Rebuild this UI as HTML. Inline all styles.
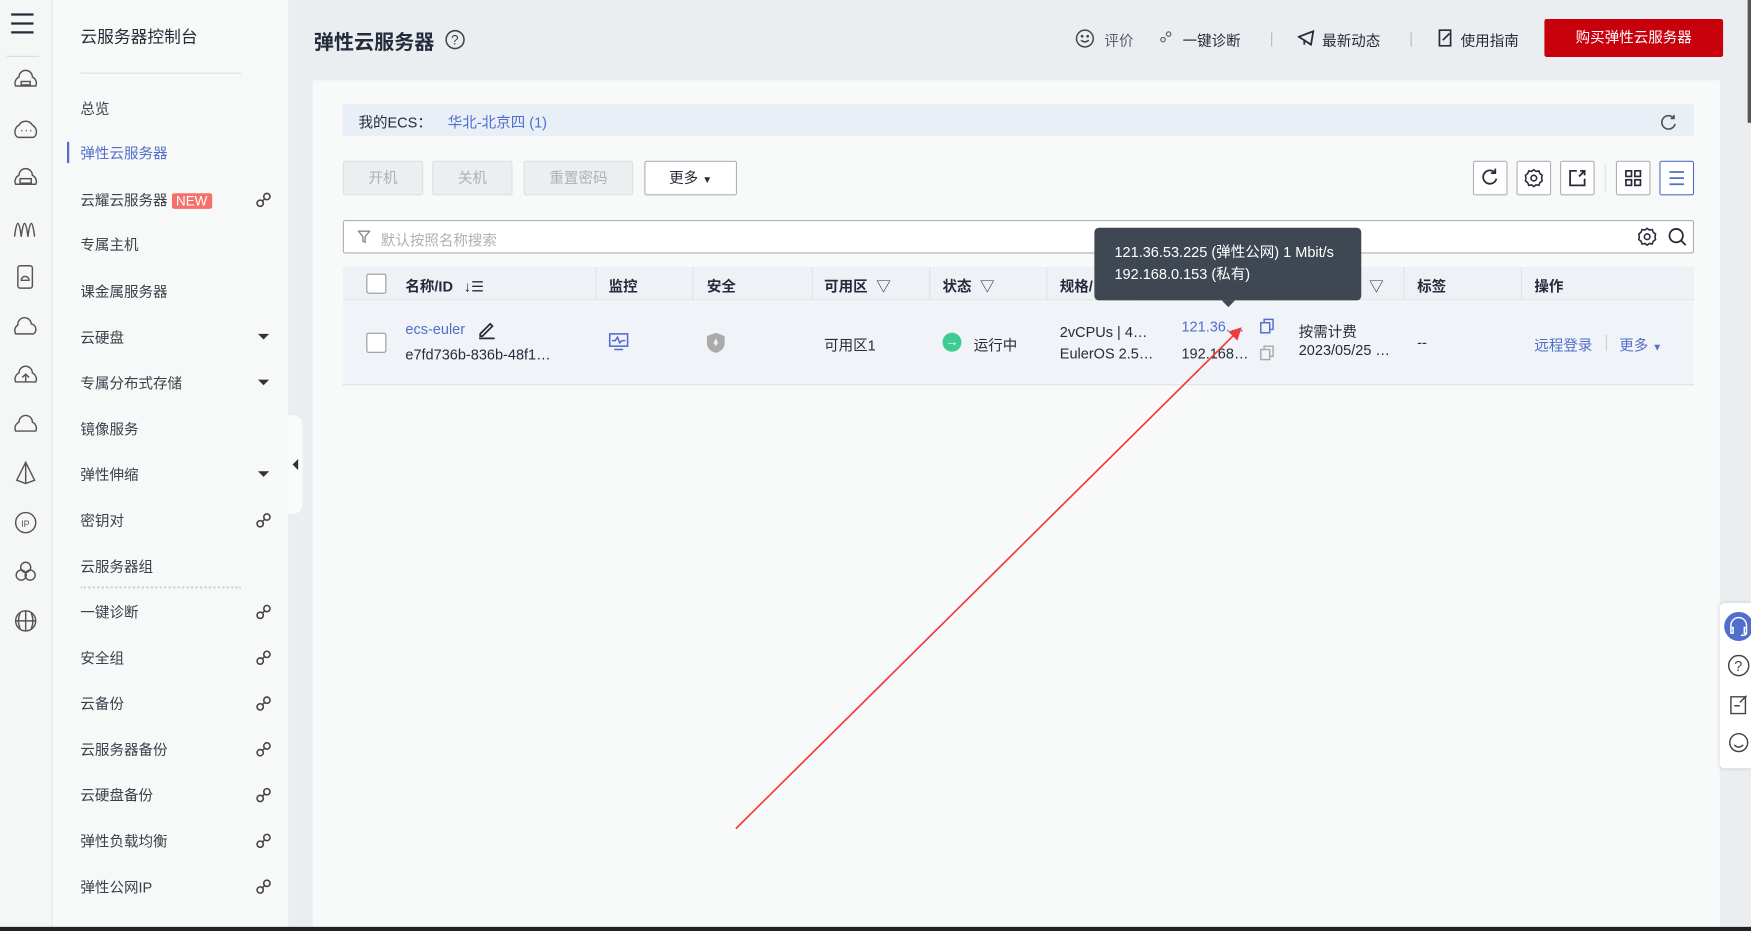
<!DOCTYPE html>
<html><head><meta charset="utf-8"><style>
*{box-sizing:border-box;margin:0;padding:0}
html,body{width:1751px;height:931px;overflow:hidden;background:#ebeff1}
#w{position:absolute;left:0;top:0;width:1568px;height:834px;transform:scale(1.11671);transform-origin:0 0;font-family:"Liberation Sans","Noto Sans CJK SC",sans-serif;color:#252b3a;font-size:13px;background:#eaeef0}
.a{position:absolute}
.ib{left:0;top:0;width:47px;height:834px;background:#f5f7f6;border-right:1px solid #e3e6e8}
.sb{left:47px;top:0;width:211px;height:834px;background:#f7f9f8}
.mi{position:absolute;left:25px;font-size:13px;color:#3a3f4a}
.car{position:absolute;left:184px;width:0;height:0;border-left:5px solid transparent;border-right:5px solid transparent;border-top:5px solid #333}
.card{left:280px;top:72px;width:1260px;height:762px;background:#f7faf8}
.btn{position:absolute;top:144px;height:31px;border:1px solid #dfe1e6;background:#eceeef;color:#adb0b8;font-size:13px;text-align:center;line-height:29px;border-radius:2px}
.ibtn{position:absolute;top:144px;width:31px;height:31px;border:1px solid #adb0b8;background:#fff;border-radius:2px}
.th{position:absolute;top:246px;font-size:13px;font-weight:bold;color:#252b3a}
.cd{position:absolute;top:239px;width:1px;height:30px;background:#e0e3e8}
</style></head><body><div id="w">
<div class="a ib">
 <svg class="a" style="left:9px;top:11px" width="22" height="20"><path d="M1 2H21M1 10H21M1 18H21" stroke="#252b3a" stroke-width="2"/></svg>
 <div class="a" style="left:6px;top:50px;width:29px;height:1px;background:#d9dcdf"></div>
 <svg class="a" style="left:11px;top:60px" width="24" height="520" fill="none" stroke="#555" stroke-width="1.3">
  <path d="M3 17a6 6 0 0 1 3-8a6 6 0 0 1 12 0a6 6 0 0 1 3 8z"/><rect x="8" y="13" width="8" height="3"/>
  <g transform="translate(0,44)"><path d="M3 17a7 7 0 0 1 3-9a7 7 0 0 1 12 0a7 7 0 0 1 3 9a4 4 0 0 1-2 2H5a4 4 0 0 1-2-2z"/><path d="M8 13h1M12 13h1M16 13h1"/></g>
  <g transform="translate(0,88)"><path d="M3 17a6 6 0 0 1 3-8a6 6 0 0 1 12 0a6 6 0 0 1 3 8z"/><rect x="7" y="12" width="10" height="4"/></g>
  <g transform="translate(0,132)"><path d="M2 20C4 4 6 4 8 20C10 4 12 4 14 20C16 4 18 4 20 20"/></g>
  <g transform="translate(0,176)"><rect x="5" y="2" width="13" height="20" rx="2"/><path d="M8 15a3 3 0 0 1 7 0z"/></g>
  <g transform="translate(0,220)"><path d="M3 19a6 6 0 0 1 2-8a6 6 0 0 1 12-1a5 5 0 0 1 2 9z"/></g>
  <g transform="translate(0,264)"><path d="M3 18a6 6 0 0 1 3-8a6 6 0 0 1 12 0a6 6 0 0 1 3 8z"/><path d="M12 18v-7M9 14l3-3 3 3"/></g>
  <g transform="translate(0,308)"><path d="M3 18a6 6 0 0 1 3-8a6 6 0 0 1 12 0a6 6 0 0 1 3 8z"/></g>
  <g transform="translate(0,352)"><path d="M12 2L4 18l8 3 8-3zM12 2v19"/></g>
  <g transform="translate(0,396)"><circle cx="12" cy="12" r="9"/><text x="8" y="16" font-size="8" stroke="none" fill="#555">IP</text></g>
  <g transform="translate(0,440)"><circle cx="12" cy="8" r="4.5"/><circle cx="8" cy="15" r="4.5"/><circle cx="16" cy="15" r="4.5"/></g>
  <g transform="translate(0,484)"><circle cx="12" cy="12" r="9"/><path d="M3 12h18M12 3v18M7 5q-3 7 0 14M17 5q3 7 0 14"/></g>
 </svg>
</div>
<div class="a sb">
 <div class="a" style="left:25px;top:22px;font-size:15px">云服务器控制台</div>
 <div class="a" style="left:25px;top:65px;width:144px;height:1px;background:#dcdfe3"></div>
 <div class="mi" style="top:87px">总览</div>
 <div class="a" style="left:13px;top:127px;width:2px;height:19px;background:#526ecc"></div>
 <div class="mi" style="top:127px;color:#526ecc">弹性云服务器</div>
 <div class="mi" style="top:169px">云耀云服务器 <span style="background:#f66f6a;color:#fff;padding:0 4px;font-size:12px;border-radius:2px">NEW</span></div>
 <div class="mi" style="top:209px">专属主机</div>
 <div class="mi" style="top:251px">课金属服务器</div>
 <div class="mi" style="top:292px">云硬盘</div><div class="car" style="top:299px"></div>
 <div class="mi" style="top:333px">专属分布式存储</div><div class="car" style="top:340px"></div>
 <div class="mi" style="top:374px">镜像服务</div>
 <div class="mi" style="top:415px">弹性伸缩</div><div class="car" style="top:422px"></div>
 <div class="mi" style="top:456px">密钥对</div>
 <div class="mi" style="top:497px">云服务器组</div>
 <div class="a" style="left:25px;top:525px;width:144px;border-top:2px dotted #d0d4d8"></div>
 <div class="mi" style="top:538px">一键诊断</div>
 <div class="mi" style="top:579px">安全组</div>
 <div class="mi" style="top:620px">云备份</div>
 <div class="mi" style="top:661px">云服务器备份</div>
 <div class="mi" style="top:702px">云硬盘备份</div>
 <div class="mi" style="top:743px">弹性负载均衡</div>
 <div class="mi" style="top:784px">弹性公网IP</div>
 <svg class="a" style="left:182px;top:0" width="14" height="834" fill="none" stroke="#444" stroke-width="1.4">
  <defs><g id="l"><circle cx="4" cy="10" r="2.8"/><circle cx="10" cy="4" r="2.8"/><path d="M6 8l2-2"/></g></defs>
  <use href="#l" y="172"/><use href="#l" y="459"/><use href="#l" y="541"/><use href="#l" y="582"/><use href="#l" y="623"/><use href="#l" y="664"/><use href="#l" y="705"/><use href="#l" y="746"/><use href="#l" y="787"/>
 </svg>
</div>
<div class="a" style="left:258px;top:372px;width:13px;height:88px;background:#fafbfb;border-radius:0 8px 8px 0"></div>
<div class="a" style="left:262px;top:411px;width:0;height:0;border-top:5px solid transparent;border-bottom:5px solid transparent;border-right:5px solid #333"></div>

<div class="a" style="left:281px;top:24px;font-size:18px;font-weight:bold">弹性云服务器</div>
<svg class="a" style="left:398px;top:26px" width="19" height="19" fill="none" stroke="#444" stroke-width="1.4"><circle cx="9.5" cy="9.5" r="8"/><text x="6" y="14" font-size="12" stroke="none" fill="#444">?</text></svg>
<svg class="a" style="left:963px;top:26px" width="17" height="17" fill="none" stroke="#444" stroke-width="1.3"><circle cx="8.5" cy="8.5" r="7.5"/><path d="M5 10q3.5 3 7 0"/><circle cx="6" cy="6.5" r=".6"/><circle cx="11" cy="6.5" r=".6"/></svg>
<div class="a" style="left:989px;top:26px;color:#575d6c">评价</div>
<svg class="a" style="left:1038px;top:27px" width="12" height="12" fill="none" stroke="#555"><circle cx="3.5" cy="8.5" r="2"/><circle cx="8.5" cy="3.5" r="2"/></svg>
<div class="a" style="left:1059px;top:26px">一键诊断</div>
<div class="a" style="left:1137px;top:27px;color:#bbb">|</div>
<svg class="a" style="left:1162px;top:27px" width="16" height="14" fill="none" stroke="#252b3a" stroke-width="1.6"><path d="M1 6L14 1L12 13L6 9z M6 9v4"/></svg>
<div class="a" style="left:1184px;top:26px">最新动态</div>
<div class="a" style="left:1262px;top:27px;color:#bbb">|</div>
<svg class="a" style="left:1287px;top:26px" width="14" height="16" fill="none" stroke="#252b3a" stroke-width="1.5"><path d="M2 1h10v14H2zM5 10l6-6"/></svg>
<div class="a" style="left:1308px;top:26px">使用指南</div>
<div class="a" style="left:1383px;top:17px;width:160px;height:34px;background:#c7000b;color:#fff;text-align:center;line-height:34px;font-size:13px;border-radius:2px">购买弹性云服务器</div>

<div class="a card"></div>
<div class="a" style="left:307px;top:93px;width:1210px;height:29px;background:#e8eff6"></div>
<div class="a" style="left:321px;top:99px">我的ECS：</div>
<div class="a" style="left:401px;top:99px;color:#526ecc">华北-北京四 (1)</div>
<svg class="a" style="left:1486px;top:102px" width="16" height="16" fill="none" stroke="#555" stroke-width="1.5"><path d="M13 4A6 6 0 1 0 14 9M13 1v3h-3"/></svg>

<div class="btn" style="left:307px;width:72px">开机</div>
<div class="btn" style="left:387px;width:72px">关机</div>
<div class="btn" style="left:469px;width:98px">重置密码</div>
<div class="btn" style="left:577px;width:83px;background:#fff;border-color:#adb0b8;color:#252b3a">更多 <span style="font-size:9px">▼</span></div>
<div class="ibtn" style="left:1319px"><svg width="29" height="29" fill="none" stroke="#252b3a" stroke-width="1.6"><path d="M19 10A6 6 0 1 0 20 15M19 6v4h-4"/></svg></div>
<div class="ibtn" style="left:1358px"><svg width="29" height="29" fill="none" stroke="#252b3a" stroke-width="1.4"><circle cx="14.5" cy="14.5" r="2.5"/><path d="M14.5 7l2 1.5 2.5-.5 1 2.5 2 1.5-.5 2.5.5 2.5-2 1.5-1 2.5-2.5-.5-2 1.5-2-1.5-2.5.5-1-2.5-2-1.5.5-2.5-.5-2.5 2-1.5 1-2.5 2.5.5z"/></svg></div>
<div class="ibtn" style="left:1397px"><svg width="29" height="29" fill="none" stroke="#252b3a" stroke-width="1.6"><path d="M14 8H8v13h13v-6M17 8h4v4M21 8l-5 5"/></svg></div>
<div class="a" style="left:1437px;top:147px;width:1px;height:26px;background:#dfe1e6"></div>
<div class="ibtn" style="left:1447px"><svg width="29" height="29" fill="none" stroke="#252b3a" stroke-width="1.5"><rect x="8" y="8" width="5" height="5"/><rect x="16" y="8" width="5" height="5"/><rect x="8" y="16" width="5" height="5"/><rect x="16" y="16" width="5" height="5"/></svg></div>
<div class="ibtn" style="left:1486px;border-color:#526ecc"><svg width="29" height="29" stroke="#526ecc" stroke-width="1.6"><path d="M8 9h13M8 14.5h13M8 20h13"/></svg></div>

<div class="a" style="left:307px;top:197px;width:1210px;height:30px;border:1px solid #adb0b8;background:#fff;border-radius:2px"></div>
<svg class="a" style="left:320px;top:206px" width="12" height="12" fill="none" stroke="#888" stroke-width="1.2"><path d="M1 1h10L7 6v5L5 10V6z"/></svg>
<div class="a" style="left:341px;top:205px;color:#adb0b8">默认按照名称搜索</div>
<svg class="a" style="left:1465px;top:202px" width="20" height="20" fill="none" stroke="#252b3a" stroke-width="1.4"><circle cx="10" cy="10" r="2.5"/><path d="M10 2.5l2 1.5 2.5-.5 1 2.5 2 1.5-.5 2.5.5 2.5-2 1.5-1 2.5-2.5-.5-2 1.5-2-1.5-2.5.5-1-2.5-2-1.5.5-2.5-.5-2.5 2-1.5 1-2.5 2.5.5z"/></svg>
<svg class="a" style="left:1493px;top:203px" width="18" height="18" fill="none" stroke="#252b3a" stroke-width="1.6"><circle cx="8" cy="8" r="6"/><path d="M12.5 12.5l4 4"/></svg>

<div class="a" style="left:307px;top:239px;width:1210px;height:30px;background:#eef1f6;border-bottom:1px solid #dfe1e6"></div>
<div class="a" style="left:307px;top:270px;width:1210px;height:75px;background:#f0f3f8;border-bottom:1px solid #dfe1e6"></div>
<div class="a" style="left:328px;top:245px;width:18px;height:18px;border:1px solid #999;background:#fff;border-radius:2px"></div>
<div class="a" style="left:328px;top:298px;width:18px;height:18px;border:1px solid #999;background:#fff;border-radius:2px"></div>
<div class="th" style="left:363px">名称/ID <span style="font-weight:normal;margin-left:6px">↓☰</span></div>
<div class="cd" style="left:533px"></div><div class="th" style="left:545px">监控</div>
<div class="cd" style="left:620px"></div><div class="th" style="left:633px">安全</div>
<div class="cd" style="left:727px"></div><div class="th" style="left:738px">可用区 <span style="font-weight:normal;margin-left:4px">▽</span></div>
<div class="cd" style="left:832px"></div><div class="th" style="left:844px">状态 <span style="font-weight:normal;margin-left:4px">▽</span></div>
<div class="cd" style="left:937px"></div><div class="th" style="left:949px">规格/</div>
<div class="th" style="left:1226px;font-weight:normal">▽</div>
<div class="cd" style="left:1257px"></div><div class="th" style="left:1269px">标签</div>
<div class="cd" style="left:1362px"></div><div class="th" style="left:1374px">操作</div>

<div class="a" style="left:363px;top:287px;color:#526ecc">ecs-euler</div>
<svg class="a" style="left:427px;top:286px" width="18" height="18" fill="none" stroke="#252b3a" stroke-width="1.5"><path d="M3 13l9-9 2 2-9 9H3zM2 17h14"/></svg>
<div class="a" style="left:363px;top:310px">e7fd736b-836b-48f1…</div>
<svg class="a" style="left:545px;top:297px" width="18" height="18" fill="none" stroke="#526ecc" stroke-width="1.4"><rect x="1" y="2" width="16" height="11"/><path d="M3 8h3l2-3 2 5 2-2h3M5 16h8"/></svg>
<svg class="a" style="left:633px;top:298px" width="16" height="18"><path d="M8 0L16 3v6c0 5-4 8-8 9C4 17 0 14 0 9V3z" fill="#aaa"/><path d="M8 5l2 4-2 3-2-3z" fill="#eee"/></svg>
<div class="a" style="left:738px;top:299px">可用区1</div>
<div class="a" style="left:844px;top:298px;width:17px;height:17px;border-radius:50%;background:#3dcc91;color:#fff;font-size:12px;text-align:center;line-height:17px;font-weight:bold">→</div>
<div class="a" style="left:872px;top:299px">运行中</div>
<div class="a" style="left:949px;top:290px">2vCPUs | 4…</div>
<div class="a" style="left:949px;top:309px">EulerOS 2.5…</div>
<div class="a" style="left:1058px;top:285px;color:#526ecc">121.36.…</div>
<div class="a" style="left:1058px;top:309px">192.168…</div>
<svg class="a" style="left:1128px;top:285px" width="14" height="14" fill="none" stroke="#526ecc" stroke-width="1.3"><rect x="1" y="4" width="8" height="9"/><path d="M4 4V1h8v9H9"/></svg>
<svg class="a" style="left:1128px;top:309px" width="14" height="14" fill="none" stroke="#aaa" stroke-width="1.3"><rect x="1" y="4" width="8" height="9"/><path d="M4 4V1h8v9H9"/></svg>
<div class="a" style="left:1163px;top:287px">按需计费</div>
<div class="a" style="left:1163px;top:306px">2023/05/25 …</div>
<div class="a" style="left:1269px;top:299px">--</div>
<div class="a" style="left:1374px;top:299px;color:#526ecc">远程登录</div>
<div class="a" style="left:1438px;top:300px;width:1px;height:14px;background:#ccc"></div>
<div class="a" style="left:1450px;top:299px;color:#526ecc">更多 <span style="font-size:9px">▼</span></div>

<div class="a" style="left:980px;top:204px;width:239px;height:65px;background:#3f4852;border-radius:4px;color:#fff;font-size:13px;padding:12px 0 0 18px;line-height:20px">121.36.53.225 (弹性公网) 1 Mbit/s<br>192.168.0.153 (私有)</div>
<div class="a" style="left:1094px;top:269px;width:0;height:0;border-left:6px solid transparent;border-right:6px solid transparent;border-top:6px solid #3f4852"></div>

<svg class="a" style="left:0;top:0" width="1568" height="834"><path d="M659 742L1108 297" stroke="#f23a3a" stroke-width="1.5"/><path d="M1112 293l-12 4 8 8z" fill="#f23a3a"/></svg>

<div class="a" style="left:1540px;top:540px;width:28px;height:148px;background:#fff;box-shadow:0 0 4px rgba(0,0,0,.15);border-radius:4px 0 0 4px"></div>
<div class="a" style="left:1544px;top:548px;width:26px;height:26px;border-radius:50%;background:#526ecc"></div>
<svg class="a" style="left:1547px;top:551px" width="20" height="20" fill="none" stroke="#fff" stroke-width="1.3"><path d="M3 12V9a7 7 0 0 1 14 0v3M3 11h2v5H3zM15 11h2v5h-2zM17 16q0 2-5 2"/></svg>
<svg class="a" style="left:1547px;top:585px" width="21" height="100" fill="none" stroke="#444" stroke-width="1.3"><circle cx="10" cy="11" r="9"/><text x="6" y="16" font-size="13" stroke="none" fill="#444">?</text><path d="M3 39h13v15H3zM6 47h5M11 44l6-6"/><circle cx="10" cy="80" r="8"/><path d="M6 82q4 4 8 0"/></svg>

<div class="a" style="left:1565px;top:0;width:3px;height:110px;background:#555"></div>
<div class="a" style="left:0;top:830px;width:1568px;height:4px;background:#1f2226"></div>
</div></body></html>
